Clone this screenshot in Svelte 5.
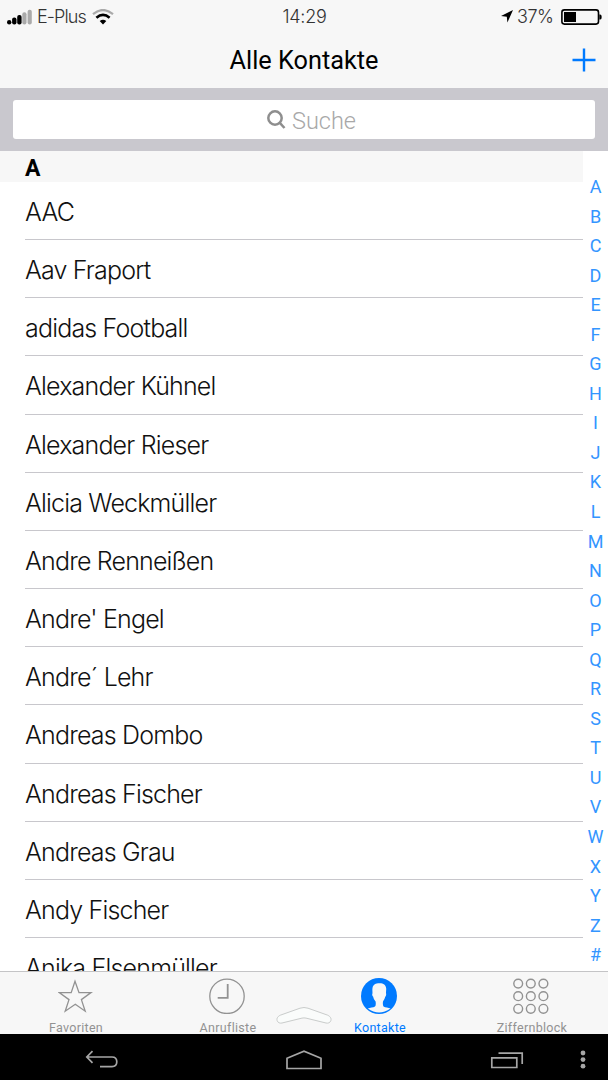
<script lang="ts">
	interface Tab {
		id: string;
		title: string;
	}

	const contacts = [
		'AAC',
		'Aav Fraport',
		'adidas Football',
		'Alexander Kühnel',
		'Alexander Rieser',
		'Alicia Weckmüller',
		'Andre Renneißen',
		"Andre' Engel",
		'Andre´ Lehr',
		'Andreas Dombo',
		'Andreas Fischer',
		'Andreas Grau',
		'Andy Fischer',
		'Anika Elsenmüller'
	];

	const letters = 'ABCDEFGHIJKLMNOPQRSTUVWXYZ#'.split('');

	const tabs: Tab[] = [
		{ id: 'favorites', title: 'Favoriten' },
		{ id: 'recents', title: 'Anrufliste' },
		{ id: 'contacts', title: 'Kontakte' },
		{ id: 'keypad', title: 'Ziffernblock' }
	];

	const dots = [5.2, 17.8, 30.4];

	let active = $state('contacts');
</script>

<div class="phone">
	<header>
		<div class="status">
			<div class="carrier">
				<svg class="signal" width="26" height="16" viewBox="0 0 26 16">
					<rect x="0" y="11" width="4.4" height="4.5" rx="2.2" />
					<rect x="5.1" y="8.5" width="4.4" height="7" rx="2" />
					<rect x="10.2" y="6" width="4.4" height="9.5" rx="2" />
					<rect class="off" x="15.3" y="3.3" width="4.2" height="12.2" rx="2" />
					<rect class="off" x="20.6" y="0.8" width="4.2" height="14.7" rx="2" />
				</svg>
				<span>E-Plus</span>
				<svg class="wifi" width="22" height="16" viewBox="0 0 22 16">
					<path class="weak" d="M1 5.2Q11-3.2 21 5.2" />
					<path d="M4.4 8.7Q11 3 17.6 8.7" />
					<path class="core" d="M7.7 12Q11 9.3 14.3 12L11 15.5Z" />
				</svg>
			</div>
			<time>14:29</time>
			<div class="power">
				<svg width="12" height="13" viewBox="0 0 12 13">
					<path d="M12 0L6.4 12.5L5.8 6.8L0 6Z" />
				</svg>
				<span>37%</span>
				<svg class="battery" width="41" height="16" viewBox="0 0 41 16">
					<rect class="case" x="0.9" y="0.9" width="36.6" height="14.2" rx="2.5" />
					<rect x="3" y="3" width="12" height="10" />
					<path d="M38.3 5.5h1q1.4 0 1.4 2.5t-1.4 2.5h-1z" />
				</svg>
			</div>
		</div>
		<div class="title">
			<h1>Alle Kontakte</h1>
			<button class="add" aria-label="Neuer Kontakt">
				<svg width="24" height="24" viewBox="0 0 24 24"><path d="M12 0.5v23M0.5 12h23" /></svg>
			</button>
		</div>
	</header>

	<div class="search">
		<div class="field">
			<svg width="19" height="20" viewBox="0 0 19 20">
				<circle cx="8" cy="8" r="6.7" />
				<path d="M12.8 12.8L17.5 18" />
			</svg>
			<span>Suche</span>
		</div>
	</div>

	<main>
		<div class="list">
			<h2>A</h2>
			<ul>
				{#each contacts as contact}
					<li>{contact}</li>
				{/each}
			</ul>
		</div>
		<nav class="index">
			{#each letters as letter}
				<span>{letter}</span>
			{/each}
		</nav>
	</main>

	<nav class="tabs">
		{#each tabs as tab}
			<button class:active={active === tab.id} onclick={() => (active = tab.id)}>
				<svg width="36" height="36" viewBox="0 0 36 36">
					{#if tab.id === 'favorites'}
						<path
							d="M17 3.2L21 14.6H33L23.4 21.6L27.2 33.2L17.3 26.2L7.2 33.2L11 21.6L1.2 14.6H13.2Z"
						/>
					{:else if tab.id === 'recents'}
						<circle cx="18" cy="18.3" r="17.2" />
						<path class="hands" d="M18.7 6V19.9H8.7" />
					{:else if tab.id === 'contacts'}
						<circle class="disc" cx="18" cy="18" r="18" />
						<path
							class="head"
							d="M18.3 5.2C22 5 25 6.6 25.2 10.5C25.3 12.5 24.9 13.5 25 15.2C25.5 16.5 24.9 18.3 24.2 18.8C23.8 20.7 23 22 22 23.5C21.7 25.6 21.8 27.6 22.5 28.6C24.2 29.8 27.5 29.6 29.5 30.6Q18 38.5 6.8 30.6C9 29.6 12.3 29.8 14 28.6C14.9 27.4 14.9 25.5 14.6 23.5C13.3 22 12.5 20.5 12.2 18.8C11.3 18.2 10.9 16.5 11.5 15.2C11.5 13.5 11.2 12 11.5 10C12.1 6.4 14.8 5.3 18.3 5.2Z"
						/>
					{:else}
						{#each dots as y}
							{#each dots as x}
								<circle class="key" cx={x} cy={y + 0.4} r="4.4" />
							{/each}
						{/each}
					{/if}
				</svg>
				<span>{tab.title}</span>
			</button>
		{/each}
		<svg class="handle" width="56" height="20" viewBox="0 0 56 20">
			<path
				d="M4.3 9.2L24 2.2Q28 0.8 32 2.2L51.7 9.2C57.5 11.8 55 18.2 50 17L30 12.1Q28 11.7 26 12.1L6 17C1 18.2-1.5 11.8 4.3 9.2Z"
			/>
		</svg>
	</nav>

	<footer>
		<svg class="back" width="34" height="20" viewBox="0 0 34 20">
			<path d="M7.5 1.2L1.8 7L7.5 12.8M2 7H27Q31.8 7 31.8 11.8T27 16.6H15" />
		</svg>
		<svg class="home" width="36" height="20" viewBox="0 0 36 20">
			<path d="M1 18.5V8.2L18 1.2L35 8.2V18.5Z" />
		</svg>
		<svg class="recent" width="34" height="20" viewBox="0 0 34 20">
			<path d="M1.8 7.8H26.8V17.5H1.8ZM8.5 3.2H32.2V14" />
		</svg>
		<svg class="more" width="6" height="20" viewBox="0 0 6 20">
			<circle cx="3" cy="3" r="2.4" />
			<circle cx="3" cy="9.6" r="2.4" />
			<circle cx="3" cy="16.2" r="2.4" />
		</svg>
	</footer>
</div>

<style>
	:global(body) {
		background: #fff;
	}

	.phone {
		display: flex;
		flex-direction: column;
		width: 608px;
		height: 1080px;
		overflow: hidden;
		font-family: Roboto, sans-serif;
		color: #000;
	}

	.phone :is(h1, h2, ul) {
		margin: 0;
		padding: 0;
		font-weight: 400;
	}

	svg {
		display: block;
		flex: none;
	}

	button {
		border: 0;
		padding: 0;
		background: none;
		font: inherit;
		cursor: pointer;
	}

	header {
		flex: none;
		height: 88px;
		background: #f7f7f7;
	}

	.status {
		display: grid;
		grid-template-columns: 1fr auto 1fr;
		align-items: center;
		height: 32px;
		padding: 0 6px 0 7px;
		font: 300 18px/32px Inter, 'Liberation Sans', sans-serif;
		color: #333;
	}

	.carrier,
	.power {
		display: flex;
		align-items: center;
	}

	.carrier span {
		margin-left: 4px;
		width: 50px;
		letter-spacing: -0.9px;
	}

	.signal .off {
		fill: #aaa;
	}

	.wifi {
		margin-left: 5px;
	}

	.wifi path {
		fill: none;
		stroke: #000;
		stroke-width: 2.7;
	}

	.wifi .weak {
		stroke: #aaa;
		stroke-width: 2.2;
	}

	.wifi .core {
		fill: #000;
		stroke: none;
	}

	time {
		letter-spacing: -0.3px;
	}

	.power {
		justify-content: flex-end;
	}

	.power span {
		width: 37px;
		margin: 1px 7px 0 4px;
		letter-spacing: -0.5px;
	}

	.battery .case {
		fill: none;
		stroke: #000;
		stroke-width: 1.6;
	}

	.title {
		display: grid;
		grid-template-columns: 1fr auto 1fr;
		align-items: center;
		height: 56px;
	}

	.title h1 {
		grid-column: 2;
		padding-top: 2px;
		font-size: 25.3px;
		line-height: 54px;
	}

	.add {
		justify-self: end;
		margin-right: 12px;
	}

	.add path {
		stroke: #007aff;
		stroke-width: 2.4;
	}

	.search {
		flex: none;
		box-sizing: border-box;
		height: 63px;
		padding: 12px 13px;
		background: #c9c8ce;
	}

	.field {
		display: flex;
		justify-content: center;
		align-items: center;
		gap: 6px;
		height: 39px;
		padding-left: 15px;
		border-radius: 3px;
		background: #fff;
		color: #a8a8a8;
		font-size: 23.5px;
		font-weight: 300;
	}

	.field span {
		padding-top: 2px;
	}

	.field svg {
		fill: none;
		stroke: #8e8e8e;
		stroke-width: 2.5;
	}

	main {
		display: flex;
		flex: 1;
		min-height: 0;
		overflow: hidden;
	}

	.list {
		width: 583px;
	}

	.list h2 {
		height: 31px;
		padding-left: 25px;
		background: #f7f7f7;
		font-size: 23px;
		font-weight: 700;
		line-height: 35px;
	}

	ul {
		list-style: none;
	}

	li {
		box-sizing: border-box;
		height: 58.17px;
		margin-left: 25px;
		border-bottom: 1px solid #c8c7cc;
		font: 300 25px/60.4px Inter, 'Liberation Sans', sans-serif;
		letter-spacing: -0.82px;
		white-space: nowrap;
		color: #111;
	}

	.index {
		display: flex;
		flex-direction: column;
		flex: 1;
		padding-top: 21px;
		text-align: center;
		color: #3395ff;
		font-size: 18px;
	}

	.index span {
		flex: none;
		height: 29.56px;
		line-height: 30.4px;
	}

	.tabs {
		position: relative;
		display: grid;
		grid-template-columns: repeat(4, 1fr);
		flex: none;
		box-sizing: border-box;
		height: 63px;
		border-top: 1px solid #c4c4c6;
		background: #f7f7f7;
	}

	.tabs button {
		display: flex;
		flex-direction: column;
		align-items: center;
		padding-top: 6px;
		color: #929292;
		font-size: 12.5px;
		line-height: 15px;
		letter-spacing: 0.3px;
	}

	.tabs button svg {
		margin-right: 2px;
		fill: none;
		stroke: #929292;
		stroke-width: 1.3;
	}

	.tabs button:first-child svg {
		margin-right: 0;
	}

	.tabs button span {
		margin-top: 6px;
	}

	.tabs .active {
		color: #007aff;
	}

	.tabs .hands {
		stroke-width: 1.8;
	}

	.tabs .key {
		stroke-width: 1.4;
	}

	.tabs .disc {
		fill: #007aff;
		stroke: none;
	}

	.tabs .head {
		fill: #f7f7f7;
		stroke: none;
	}

	.handle {
		position: absolute;
		left: 276px;
		bottom: 8px;
		fill: #fafcfb;
		stroke: #c9cccb;
		stroke-width: 1;
	}

	footer {
		display: flex;
		align-items: center;
		flex: none;
		height: 46px;
		padding: 0 22px 0 85px;
		background: #000;
	}

	footer svg {
		margin-top: 5px;
		fill: none;
		stroke: #a6a6a6;
		stroke-width: 1.7;
	}

	.home {
		margin-left: 167px;
	}

	.recent {
		margin-left: 168px;
	}

	.more {
		margin-left: auto;
	}

	.more circle {
		fill: #a6a6a6;
		stroke: none;
	}
</style>
